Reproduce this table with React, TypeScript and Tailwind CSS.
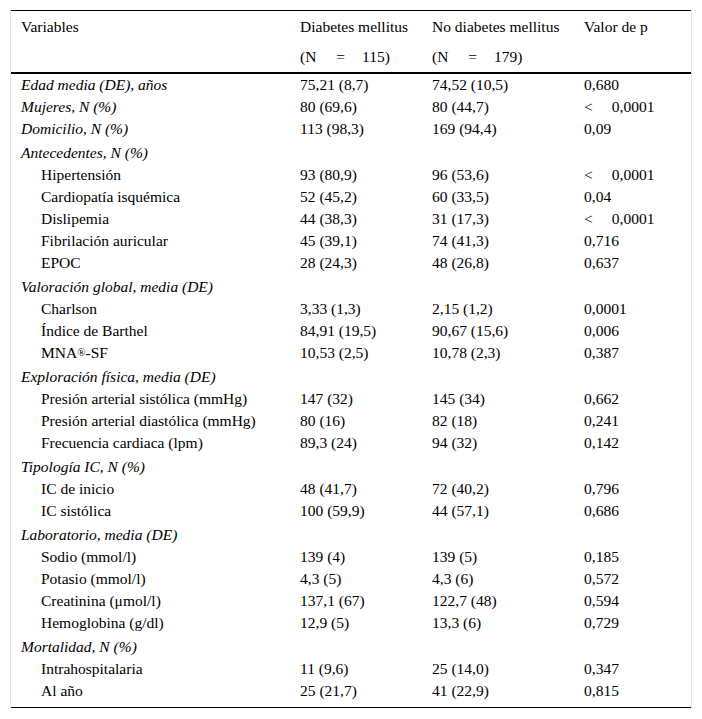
import React from "react";

type Row =
  | { kind: "section"; label: string }
  | { kind: "data"; label: React.ReactNode; a: string; b: string; p: string; italic?: boolean };

const rows: Row[] = [
  { kind: "data", italic: true, label: "Edad media (DE), años", a: "75,21 (8,7)", b: "74,52 (10,5)", p: "0,680" },
  { kind: "data", italic: true, label: "Mujeres, N (%)", a: "80 (69,6)", b: "80 (44,7)", p: "<0,0001" },
  { kind: "data", italic: true, label: "Domicilio, N (%)", a: "113 (98,3)", b: "169 (94,4)", p: "0,09" },
  { kind: "section", label: "Antecedentes, N (%)" },
  { kind: "data", label: "Hipertensión", a: "93 (80,9)", b: "96 (53,6)", p: "<0,0001" },
  { kind: "data", label: "Cardiopatía isquémica", a: "52 (45,2)", b: "60 (33,5)", p: "0,04" },
  { kind: "data", label: "Dislipemia", a: "44 (38,3)", b: "31 (17,3)", p: "<0,0001" },
  { kind: "data", label: "Fibrilación auricular", a: "45 (39,1)", b: "74 (41,3)", p: "0,716" },
  { kind: "data", label: "EPOC", a: "28 (24,3)", b: "48 (26,8)", p: "0,637" },
  { kind: "section", label: "Valoración global, media (DE)" },
  { kind: "data", label: "Charlson", a: "3,33 (1,3)", b: "2,15 (1,2)", p: "0,0001" },
  { kind: "data", label: "Índice de Barthel", a: "84,91 (19,5)", b: "90,67 (15,6)", p: "0,006" },
  {
    kind: "data",
    label: (
      <>
        MNA<sup className="text-[11px] relative -top-[2px]">®</sup>-SF
      </>
    ),
    a: "10,53 (2,5)",
    b: "10,78 (2,3)",
    p: "0,387",
  },
  { kind: "section", label: "Exploración física, media (DE)" },
  { kind: "data", label: "Presión arterial sistólica (mmHg)", a: "147 (32)", b: "145 (34)", p: "0,662" },
  { kind: "data", label: "Presión arterial diastólica (mmHg)", a: "80 (16)", b: "82 (18)", p: "0,241" },
  { kind: "data", label: "Frecuencia cardiaca (lpm)", a: "89,3 (24)", b: "94 (32)", p: "0,142" },
  { kind: "section", label: "Tipología IC, N (%)" },
  { kind: "data", label: "IC de inicio", a: "48 (41,7)", b: "72 (40,2)", p: "0,796" },
  { kind: "data", label: "IC sistólica", a: "100 (59,9)", b: "44 (57,1)", p: "0,686" },
  { kind: "section", label: "Laboratorio, media (DE)" },
  { kind: "data", label: "Sodio (mmol/l)", a: "139 (4)", b: "139 (5)", p: "0,185" },
  { kind: "data", label: "Potasio (mmol/l)", a: "4,3 (5)", b: "4,3 (6)", p: "0,572" },
  { kind: "data", label: "Creatinina (μmol/l)", a: "137,1 (67)", b: "122,7 (48)", p: "0,594" },
  { kind: "data", label: "Hemoglobina (g/dl)", a: "12,9 (5)", b: "13,3 (6)", p: "0,729" },
  { kind: "section", label: "Mortalidad, N (%)" },
  { kind: "data", label: "Intrahospitalaria", a: "11 (9,6)", b: "25 (14,0)", p: "0,347" },
  { kind: "data", label: "Al año", a: "25 (21,7)", b: "41 (22,9)", p: "0,815" },
];

function PVal({ p }: { p: string }) {
  if (p.startsWith("<")) {
    return (
      <span className="flex">
        <span>&lt;</span>
        <span className="ml-[19px]">{p.slice(1)}</span>
      </span>
    );
  }
  return <span>{p}</span>;
}

export default function App() {
  return (
    <div
      className="bg-white w-[702px] h-[719px] text-[15.5px] text-black pt-[9px]"
      style={{ fontFamily: '"Liberation Serif", "Times New Roman", serif' }}
    >
      <div className="ml-[10px] w-[682px] border-x border-[#e3e3e3]">
        <div className="border-t border-black mt-[1px]">
          {/* header */}
          <div className="flex pl-[10px] h-[31px] items-center leading-none">
            <div className="w-[279px]">Variables</div>
            <div className="w-[132px]">Diabetes mellitus</div>
            <div className="w-[152px]">No diabetes mellitus</div>
            <div className="flex-1">Valor de p</div>
          </div>
          <div className="flex pl-[10px] h-[30px] items-center leading-none">
            <div className="w-[279px]"></div>
            <div className="w-[132px] flex">
              <span>(N</span>
              <span className="ml-[20px]">=</span>
              <span className="ml-[17px]">115)</span>
            </div>
            <div className="w-[152px] flex">
              <span>(N</span>
              <span className="ml-[20px]">=</span>
              <span className="ml-[17px]">179)</span>
            </div>
            <div className="flex-1"></div>
          </div>
          <div className="border-t-2 border-black pb-[5px] border-b border-b-black">
            {rows.map((r, i) =>
              r.kind === "section" ? (
                <div key={i} className="flex pl-[10px] h-[24px] pt-[2px] items-center italic leading-none">
                  {r.label}
                </div>
              ) : (
                <div key={i} className="flex pl-[10px] h-[22px] items-center leading-none">
                  <div className={r.italic ? "w-[279px] italic" : "w-[279px] pl-[20px]"}>{r.label}</div>
                  <div className="w-[132px]">{r.a}</div>
                  <div className="w-[152px]">{r.b}</div>
                  <div className="flex-1">
                    <PVal p={r.p} />
                  </div>
                </div>
              )
            )}
          </div>
        </div>
      </div>
    </div>
  );
}
